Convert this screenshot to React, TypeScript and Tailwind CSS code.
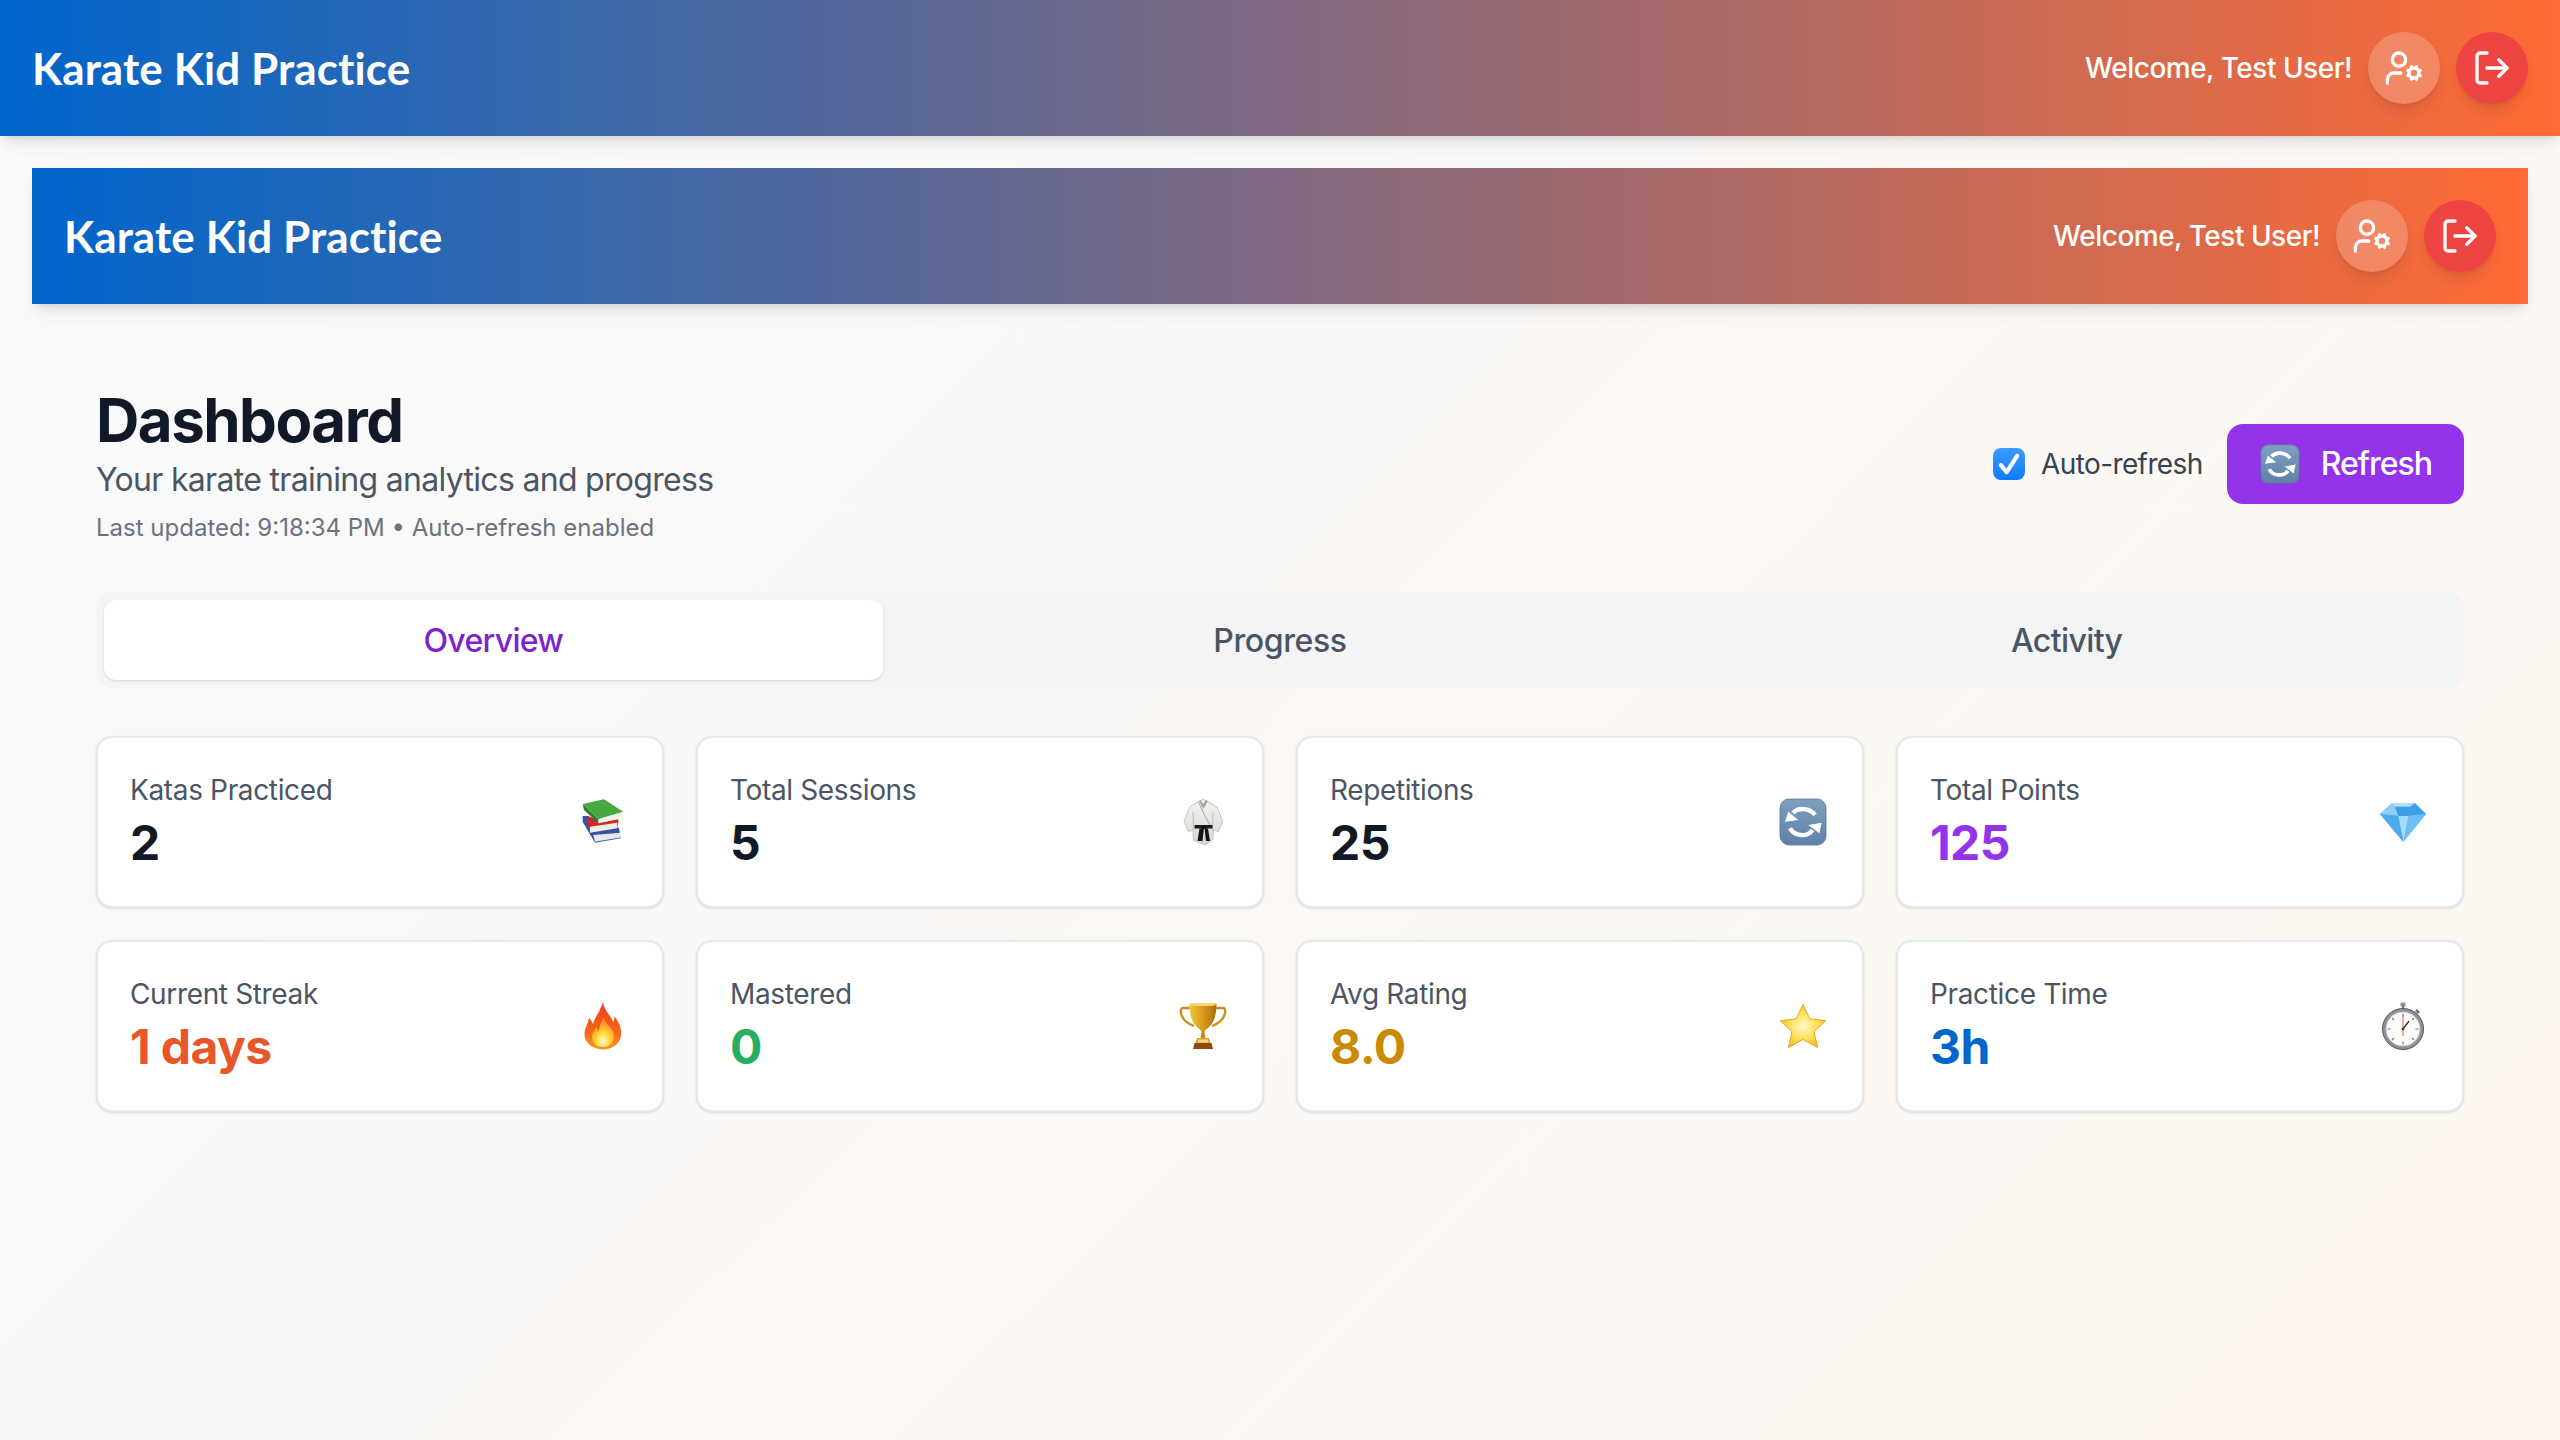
import type { ReactNode } from "react";
import { UserCog, LogOut } from "lucide-react";

function Books() {
  return (
    <svg viewBox="0 0 48 48" className="h-12 w-12">
      <path d="M3.7 18 9 18 40 30 41.7 40.3 16 44.7 3.7 23.7Z" fill="#2f55a8" />
      <path d="M14.3 37 41 34.7 41.7 39.5 16 43.7Z" fill="#e8e8e4" />
      <path d="M9.3 18 19.3 25 39.3 21 39.3 25 11 29 8.3 23.7Z" fill="#d9271e" />
      <path d="M8.3 23.7 11 29 39.3 25 38.3 30.3 11 34.7Z" fill="#c8241b" />
      <path d="M11 28.7 38.3 24.7 38.3 30.3 11 34.7Z" fill="#eeeeea" />
      <path d="M3.7 6 25 1.3 44.3 13.7 19.3 21.3Z" fill="#46a83f" />
      <path d="M3.7 6 19.3 21.3 19.3 25.3 5 12Z" fill="#2e7d2b" />
      <path d="M19.3 21.3 44.3 13.7 43.3 20.3 19.3 25.3Z" fill="#f0f0ec" />
    </svg>
  );
}

function Gi() {
  return (
    <svg viewBox="0 0 48 48" className="h-12 w-12">
      <defs>
        <linearGradient id="giCloth" x1="0" y1="0" x2="0" y2="1">
          <stop offset="0" stopColor="#f4f3f1" />
          <stop offset="1" stopColor="#d8d6d2" />
        </linearGradient>
      </defs>
      <path d="M19 4 24.3 1.300 29.500 4 38 9 43.700 23.700 39.300 33.700 34.500 32 33.700 42 26 47 14.300 42 14 32 9.300 33.700 5 23.700 10.500 9Z" fill="url(#giCloth)" stroke="#b9b7b3" strokeWidth="0.8" />
      <path d="M14 14 14.500 32M34 14 33.500 32" stroke="#b5b3ae" strokeWidth="0.8" fill="none" />
      <path d="M20 3 24.500 11 29 3 27 2 24.300 6 21.500 2Z" fill="#a9a7a3" />
      <path d="M19.500 4 24 14 31 27" stroke="#b7b5b0" strokeWidth="1.200" fill="none" />
      <path d="M15.500 27 33.500 27 33.500 30.500 15.500 30.500Z" fill="#1c1c1c" />
      <path d="M22 27h5.500v4h-5.500zM20.500 30.500 25 30 23.500 43 18.500 43ZM25.500 30 29 30.500 31 43 27 43Z" fill="#141414" />
    </svg>
  );
}

function RepeatIcon({ size = "h-12 w-12" }: { size?: string }) {
  return (
    <svg viewBox="0 0 48 48" className={size}>
      <defs>
        <linearGradient id="repBg" x1="0" y1="0" x2="0" y2="1">
          <stop offset="0" stopColor="#7f9fc0" />
          <stop offset="1" stopColor="#5f81a6" />
        </linearGradient>
      </defs>
      <rect x="1" y="1" width="46" height="46" rx="9" fill="url(#repBg)" stroke="#55759a" strokeWidth="0.8" />
      <path d="M36 17C32 11 20 8 14 15" stroke="#fff" strokeWidth="4.4" fill="none" />
      <path d="M6 23.7 19.3 22 9.3 13.7Z" fill="#fff" />
      <path d="M11 30.3C15 38 28 40 33.5 32" stroke="#fff" strokeWidth="4.4" fill="none" />
      <path d="M42.7 24.7 29.3 27 40.3 35.3Z" fill="#fff" />
    </svg>
  );
}

function Diamond() {
  return (
    <svg viewBox="0 0 48 48" className="h-12 w-12">
      <path d="M1 16 12.7 5.3H36L47 16 24.3 43.7Z" fill="#5db6f5" />
      <path d="M12.7 5.3H36L31 8.7H16Z" fill="#b4e0fb" />
      <path d="M1 16 12.7 5.3 16 8.7 19.3 18Z" fill="#8ecdf8" />
      <path d="M47 16 36 5.3 31 8.7 29.3 18Z" fill="#3f9fea" />
      <path d="M16 8.7H31L29.3 18H19.3Z" fill="#3d9be8" />
      <path d="M1 16 19.3 18H29.3L47 16 24.3 43.7Z" fill="#6cc0f7" />
      <path d="M19.3 18H29.3L24.3 43.7Z" fill="#a6dbfb" />
      <path d="M1 16 19.3 18 24.3 43.7Z" fill="#4ea9ee" />
    </svg>
  );
}

function Fire() {
  return (
    <svg viewBox="0 0 48 48" className="h-12 w-12">
      <defs>
        <linearGradient id="fireOuter" x1="0" y1="0" x2="0" y2="1">
          <stop offset="0" stopColor="#ef3a1d" />
          <stop offset="0.6" stopColor="#f5641c" />
          <stop offset="1" stopColor="#fb9a1f" />
        </linearGradient>
        <radialGradient id="fireInner" cx="0.5" cy="0.82" r="0.7">
          <stop offset="0" stopColor="#fffbd8" />
          <stop offset="0.4" stopColor="#ffdc3c" />
          <stop offset="1" stopColor="#fb8a1c" />
        </radialGradient>
      </defs>
      <path d="M24 0C25 9 32 13 34 20 35.500 18 35.500 15.500 35 14 41 21 43 28 42 34 41 42 33 47.500 24 47.500 14 47.500 6 41 5.500 33 5 27 9 22.500 10 16 12 18 13 20 14 22 16 15 21 10 24 0Z" fill="url(#fireOuter)" />
      <path d="M24.500 15C26 22 33 25 35 32 36 39 31 45 24 45 17 45 12.500 40 13 34 13.500 30 16 28 17.500 25 18.500 27 19 28 20 29 20 24 23 20 24.500 15Z" fill="url(#fireInner)" />
    </svg>
  );
}

function Trophy() {
  return (
    <svg viewBox="0 0 48 48" className="h-12 w-12">
      <defs>
        <linearGradient id="cup" x1="0" y1="0" x2="1" y2="0">
          <stop offset="0" stopColor="#f2c53d" />
          <stop offset="0.5" stopColor="#d89a1d" />
          <stop offset="1" stopColor="#a86d0e" />
        </linearGradient>
      </defs>
      <path d="M12 6H4C2 6 1.500 8 2 11 3 17 7 21 15 24M36 6H44C46 6 46.500 8 46 11 45 17 41 21 33 24" fill="none" stroke="#c8901c" strokeWidth="2.400" />
      <path d="M10.500 1.500H37.500C37.500 10 36.500 18 31 24 28 27 26 28 25.500 29.500H22.500C22 28 20 27 17 24 11.500 18 10.500 10 10.500 1.500Z" fill="url(#cup)" />
      <ellipse cx="24" cy="2.500" rx="13.500" ry="1.600" fill="#f7d874" />
      <path d="M22.500 29H25.500L26.500 37H21.500Z" fill="#c78c19" />
      <path d="M18 36H30L31.500 41H16.500Z" fill="#d9a22a" />
      <rect x="19" y="37.500" width="10" height="3" fill="#f3d88a" />
      <path d="M15.500 41H32.500L34 47H14Z" fill="#8f4a12" />
    </svg>
  );
}

function Star() {
  return (
    <svg viewBox="0 0 48 48" className="h-12 w-12">
      <defs>
        <radialGradient id="starFill" cx="0.5" cy="0.5" r="0.55">
          <stop offset="0" stopColor="#fff8c8" />
          <stop offset="0.55" stopColor="#ffe05a" />
          <stop offset="1" stopColor="#fcb51f" />
        </radialGradient>
      </defs>
      <path d="M24 2.500 30.800 16.800 46.800 18.800 35 29.500 38.500 45.500 24 37.500 9.500 45.500 13 29.500 1.200 18.800 17.200 16.800Z" fill="url(#starFill)" stroke="#eda021" strokeWidth="1" strokeLinejoin="round" />
    </svg>
  );
}

function Stopwatch() {
  return (
    <svg viewBox="0 0 48 48" className="h-12 w-12">
      <rect x="21.500" y="0.500" width="5" height="4" rx="1.200" fill="#8b8f96" />
      <rect x="23" y="4" width="2" height="4" fill="#6b6f75" />
      <path d="M38 7 41 10 39 12 36 9Z" fill="#70747a" />
      <circle cx="24" cy="27" r="20.500" fill="#8d9097" stroke="#55585e" strokeWidth="1" />
      <circle cx="24" cy="27" r="17" fill="#fbfbfa" stroke="#c8cacd" strokeWidth="0.8" />
      <g stroke="#70747a" strokeWidth="1.100">
        <path d="M24 11.500v3M24 39.500v3M8.500 27h3M36.500 27h3M13 16l2 2M33 36l2 2M35 16l-2 2M15 36l-2 2" />
      </g>
      <path d="M24 27 24 13" stroke="#e0492f" strokeWidth="0.9" />
      <path d="M24 27 30 19" stroke="#2b2b2b" strokeWidth="1.300" />
      <path d="M24 27 24 34" stroke="#e0492f" strokeWidth="0.900" />
      <circle cx="24" cy="27" r="1.300" fill="#2b2b2b" />
    </svg>
  );
}

const stats: { label: string; value: string; icon: ReactNode; color: string }[] = [
  { label: "Katas Practiced", value: "2", icon: <Books />, color: "text-[#111827]" },
  { label: "Total Sessions", value: "5", icon: <Gi />, color: "text-[#111827]" },
  { label: "Repetitions", value: "25", icon: <RepeatIcon />, color: "text-[#111827]" },
  { label: "Total Points", value: "125", icon: <Diamond />, color: "text-[#9333ea]" },
  { label: "Current Streak", value: "1 days", icon: <Fire />, color: "text-[#e8572a]" },
  { label: "Mastered", value: "0", icon: <Trophy />, color: "text-[#27ae60]" },
  { label: "Avg Rating", value: "8.0", icon: <Star />, color: "text-[#ca8a04]" },
  { label: "Practice Time", value: "3h", icon: <Stopwatch />, color: "text-[#0066cc]" },
];

function Header() {
  return (
    <header className="flex h-[136px] items-center justify-between bg-[linear-gradient(90deg,#0066cc,#ff6b35)] px-8 shadow-lg">
      <h1 className="font-['Comic_Sans_MS','Lato',sans-serif] text-[44px] font-bold tracking-[0.1px] text-white">Karate Kid Practice</h1>
      <div className="flex items-center gap-4">
        <span className="text-[28px] font-medium tracking-[-0.5px] text-white">Welcome, Test User!</span>
        <button className="flex h-[72px] w-[72px] items-center justify-center rounded-full bg-white/20 text-white shadow-lg">
          <UserCog size={40} />
        </button>
        <button className="flex h-[72px] w-[72px] items-center justify-center rounded-full bg-[#ef4444] text-white shadow-lg">
          <LogOut size={40} />
        </button>
      </div>
    </header>
  );
}

export default function App() {
  return (
    <div className="min-h-[1440px] bg-[linear-gradient(135deg,#f8fafc,#fef7f0)] font-['Inter',sans-serif]">
      <Header />
      <div className="px-8 pt-8">
        <Header />
      </div>
      <main className="px-24 pt-20">
        <div className="flex items-center justify-between">
          <div>
            <h2 className="text-[60px] font-bold leading-[72px] tracking-[-1.5px] text-[#111827]">Dashboard</h2>
            <p className="mt-1 text-[32px] leading-[40px] tracking-[-0.69px] text-[#4b5563]">Your karate training analytics and progress</p>
            <p className="mt-3 text-[24px] leading-[32px] text-[#6b7280]">Last updated: 9:18:34 PM • Auto-refresh enabled</p>
          </div>
          <div className="flex items-center gap-6">
            <label className="flex items-center gap-4 text-[28px] tracking-[-0.6px] text-[#374151]">
              <span className="flex h-8 w-8 items-center justify-center rounded-lg bg-gradient-to-b from-[#3b9bff] to-[#0a7cff]">
                <svg viewBox="0 0 24 24" className="h-7 w-7" fill="none" stroke="#fff" strokeWidth="3.5" strokeLinecap="round" strokeLinejoin="round"><path d="M5 13l5 6 9-14" /></svg>
              </span>
              Auto-refresh
            </label>
            <button className="flex h-20 items-center gap-[21px] rounded-2xl bg-[#9333ea] pl-[33px] pr-8 text-[32px] font-medium tracking-[-1px] text-white">
              <RepeatIcon size="h-10 w-10" />
              Refresh
            </button>
          </div>
        </div>
        <div className="mt-12 grid h-24 grid-cols-3 gap-2 rounded-2xl bg-[#f3f4f6] p-2">
          <div className="flex items-center justify-center rounded-xl bg-white pt-px text-[32px] font-medium tracking-[-0.7px] text-[#7e22ce] shadow-sm">Overview</div>
          <div className="flex items-center justify-center pt-px text-[32px] font-medium tracking-[-0.4px] text-[#4b5563]">Progress</div>
          <div className="flex items-center justify-center pt-px text-[32px] font-medium tracking-[-0.6px] text-[#4b5563]">Activity</div>
        </div>
        <div className="mt-12 grid grid-cols-4 gap-8">
          {stats.map((s) => (
            <div key={s.label} className="flex items-center justify-between rounded-2xl border-2 border-[#e5e7eb] bg-white p-8 shadow-sm">
              <div>
                <div className="text-[28px] leading-[40px] tracking-[-0.35px] text-[#4b5563]">{s.label}</div>
                <div className={`pt-[2px] text-[48px] font-bold leading-[62px] tracking-[-0.6px] ${s.color}`}>{s.value}</div>
              </div>
              <div className="mr-[3px]">{s.icon}</div>
            </div>
          ))}
        </div>
      </main>
    </div>
  );
}
